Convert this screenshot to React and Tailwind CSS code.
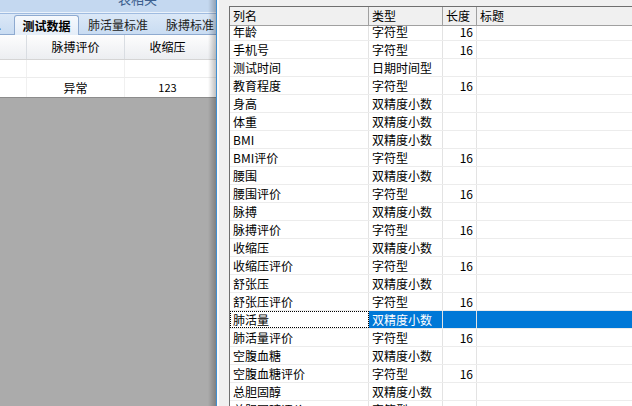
import React from "react";

const rows = [
  ["年龄", "字符型", "16"],
  ["手机号", "字符型", "16"],
  ["测试时间", "日期时间型", ""],
  ["教育程度", "字符型", "16"],
  ["身高", "双精度小数", ""],
  ["体重", "双精度小数", ""],
  ["BMI", "双精度小数", ""],
  ["BMI评价", "字符型", "16"],
  ["腰围", "双精度小数", ""],
  ["腰围评价", "字符型", "16"],
  ["脉搏", "双精度小数", ""],
  ["脉搏评价", "字符型", "16"],
  ["收缩压", "双精度小数", ""],
  ["收缩压评价", "字符型", "16"],
  ["舒张压", "双精度小数", ""],
  ["舒张压评价", "字符型", "16"],
  ["肺活量", "双精度小数", "", true],
  ["肺活量评价", "字符型", "16"],
  ["空腹血糖", "双精度小数", ""],
  ["空腹血糖评价", "字符型", "16"],
  ["总胆固醇", "双精度小数", ""],
  ["总胆固醇评价", "字符型", "16"],
];

function Row({ name, type, len, sel }) {
  return (
    <div className="flex h-[18px] shrink-0 border-b border-[#ececec] leading-[17px]">
      <div
        className={
          "w-[139px] shrink-0 border-r border-[#e3e3e3] pl-[3px] whitespace-nowrap overflow-hidden " +
          (sel ? "outline-1 outline-dotted outline-black -outline-offset-1 bg-white" : "")
        }
      >
        {name}
      </div>
      <div
        className={
          "w-[74px] shrink-0 border-r border-[#e3e3e3] pl-[3px] whitespace-nowrap overflow-hidden " +
          (sel ? "bg-[#0078d7] text-white" : "")
        }
      >
        {type}
      </div>
      <div
        className={
          "w-[34px] shrink-0 border-r border-[#e3e3e3] pr-[3px] text-right " +
          (sel ? "bg-[#0078d7] text-white" : "")
        }
      >
        {len}
      </div>
      <div className={"flex-1 " + (sel ? "bg-[#0078d7]" : "")}></div>
    </div>
  );
}

export default function App() {
  return (
    <div
      className="w-[632px] h-[406px] flex overflow-hidden bg-[#ababab] text-[12px] text-black"
      style={{ fontFamily: '"Noto Sans CJK SC", "Liberation Sans", sans-serif' }}
    >
      {/* Left panel */}
      <div className="w-[216px] h-full shrink-0 flex flex-col relative">
        <div className="h-[12px] shrink-0 overflow-hidden bg-[#c4d8f0]">
          <div className="pl-[118px] mt-[-8px] text-[13px] leading-[14px] text-[#3d5f8e]">表相关</div>
        </div>
        <div className="h-[1px] bg-[#eaf2fb]"></div>
        <div className="h-[1px] bg-[#9fbbe0]"></div>
        <div className="h-[21px] shrink-0 flex items-end bg-gradient-to-b from-[#dbe8f7] to-[#c9dcf2] border-b border-[#8eaad0]">
          <div className="w-[14px] h-[19px] leading-[19px] overflow-hidden text-[#333]">
            <span className="ml-[-2px]">.</span>
          </div>
          <div className="w-[65px] h-[20px] leading-[19px] text-center font-bold bg-gradient-to-b from-[#f6f9fd] to-[#e4edf8] border border-b-0 border-[#8eaad0] rounded-t-[3px] mb-[-1px]">
            测试数据
          </div>
          <div className="ml-[9px] h-[19px] leading-[19px] text-[#222]">肺活量标准</div>
          <div className="ml-[18px] h-[19px] leading-[19px] text-[#222] whitespace-nowrap">脉搏标准</div>
        </div>
        <div className="h-[25px] shrink-0 flex bg-gradient-to-b from-[#fdfdfd] to-[#eceef1] border-b border-[#d5d5d5] leading-[24px]">
          <div className="w-[27px] border-r border-[#d9dde2]"></div>
          <div className="w-[98px] border-r border-[#d9dde2] text-center">脉搏评价</div>
          <div className="w-[85px] text-center">收缩压</div>
        </div>
        <div className="h-[18px] shrink-0 flex bg-white border-b border-[#ececec]">
          <div className="w-[27px] border-r border-[#f0f0f0]"></div>
          <div className="w-[98px] border-r border-[#f0f0f0]"></div>
          <div className="w-[85px]"></div>
        </div>
        <div className="h-[20px] shrink-0 flex bg-white border-b border-[#8c8c8c] leading-[19px]">
          <div className="w-[27px] border-r border-[#f0f0f0]"></div>
          <div className="w-[98px] border-r border-[#f0f0f0] text-center">异常</div>
          <div className="w-[85px] text-center text-[11px]">123</div>
        </div>
        <div className="flex-1 bg-[#ababab]"></div>
        <div className="absolute top-0 right-0 w-[8px] h-full bg-gradient-to-r from-transparent to-black/25"></div>
      </div>

      {/* window edge */}
      <div className="w-[1px] shrink-0 bg-[#3f8fd2]"></div>
      <div className="w-[2px] shrink-0 bg-[#fbfbfb]"></div>

      {/* Right panel */}
      <div className="flex-1 flex flex-col bg-[#f0f0f0] pl-[10px] pt-[6px] min-w-0">
        <div className="flex-1 flex flex-col bg-white border-l border-t border-[#6f6f6f] overflow-hidden">
          <div className="h-[19px] shrink-0 flex bg-[#f0f0f0] border-b border-[#a0a0a0] leading-[18px] relative z-10">
            <div className="w-[139px] shrink-0 border-r border-[#a0a0a0] pl-[3px]">列名</div>
            <div className="w-[74px] shrink-0 border-r border-[#a0a0a0] pl-[3px]">类型</div>
            <div className="w-[34px] shrink-0 border-r border-[#a0a0a0] pl-[3px]">长度</div>
            <div className="flex-1 pl-[3px]">标题</div>
          </div>
          <div className="flex flex-col mt-[-3px]">
            {rows.map((r, i) => (
              <Row key={i} name={r[0]} type={r[1]} len={r[2]} sel={r[3]} />
            ))}
          </div>
        </div>
      </div>
    </div>
  );
}
